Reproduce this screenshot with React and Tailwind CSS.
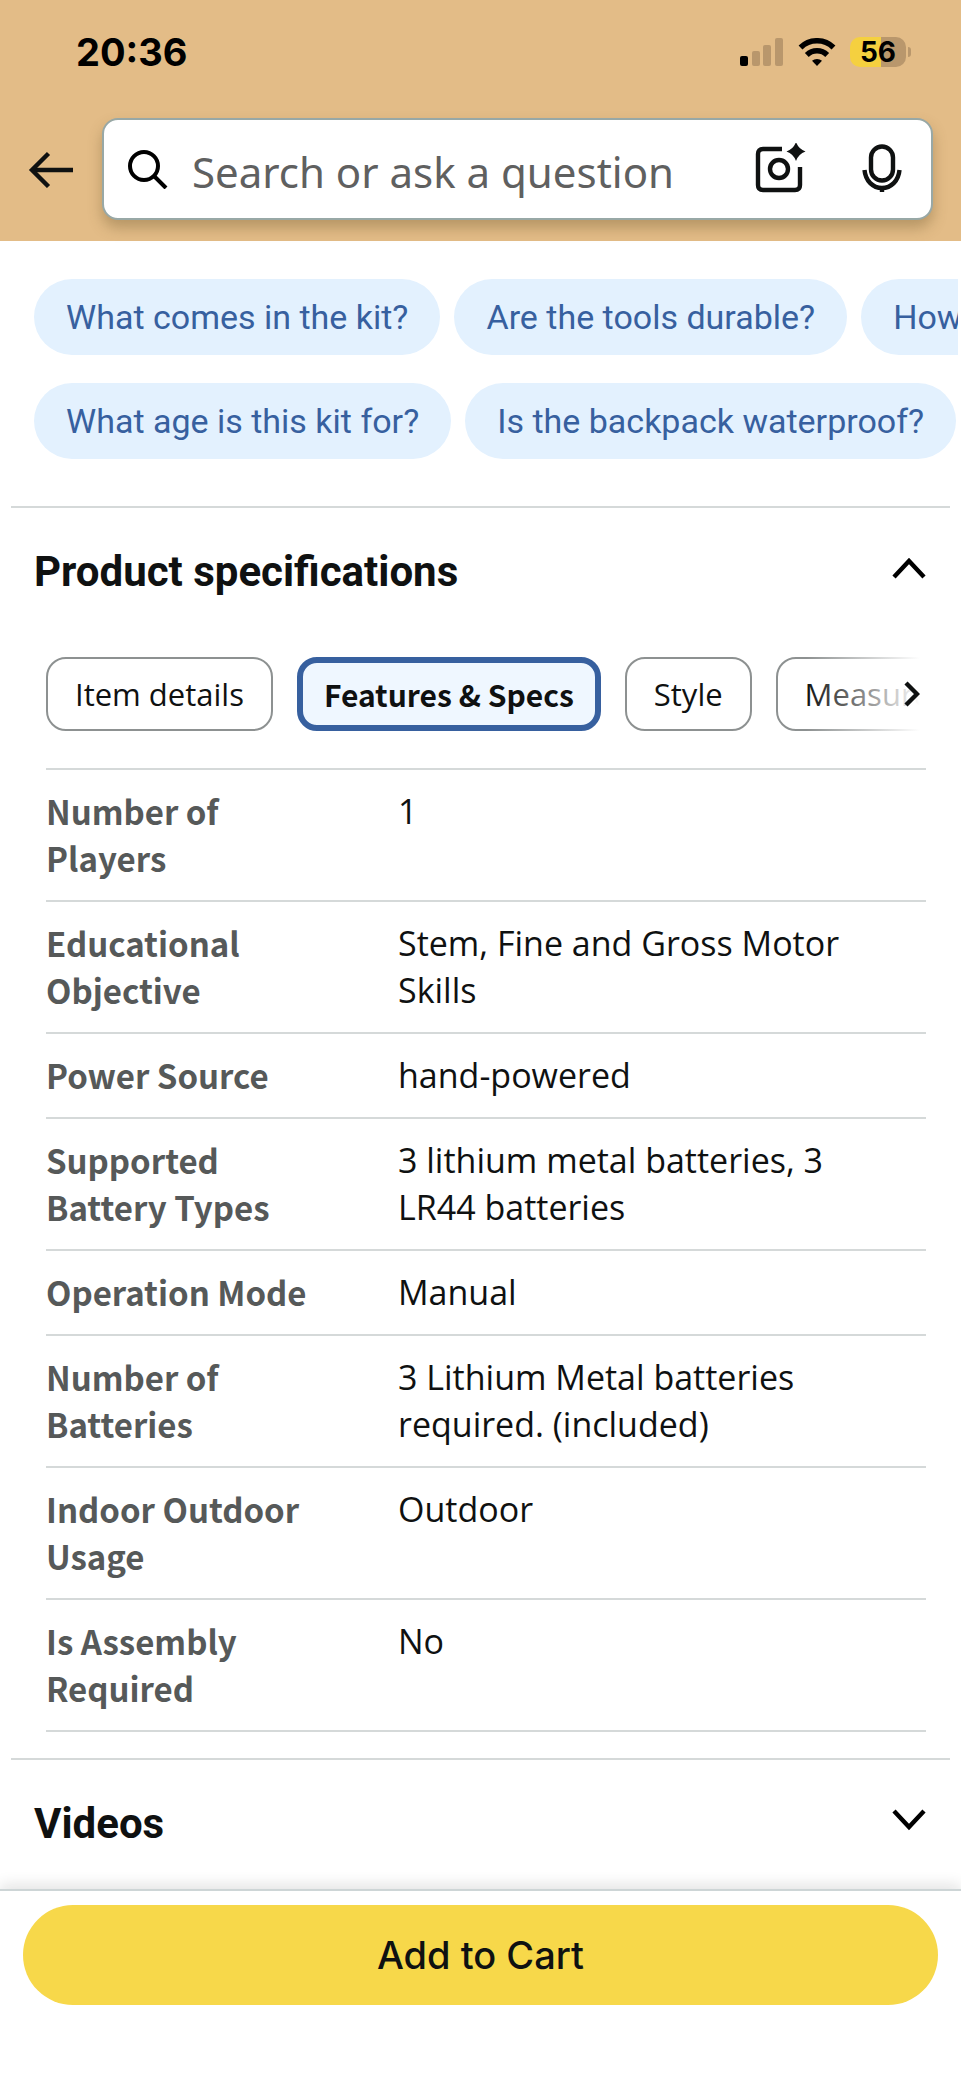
import React, { useState } from 'react';

const questionRows = [
    ['What comes in the kit?', 'Are the tools durable?', 'How long do batteries last?'],
    ['What age is this kit for?', 'Is the backpack waterproof?'],
];

const tabs = ['Item details', 'Features & Specs', 'Style', 'Measurements'];

const specs = [
    ['Number of Players', '1'],
    ['Educational Objective', 'Stem, Fine and Gross Motor Skills'],
    ['Power Source', 'hand-powered'],
    ['Supported Battery Types', '3 lithium metal batteries, 3 LR44 batteries'],
    ['Operation Mode', 'Manual'],
    ['Number of Batteries', '3 Lithium Metal batteries required. (included)'],
    ['Indoor Outdoor Usage', 'Outdoor'],
    ['Is Assembly Required', 'No'],
];

function StatusBar() {
    return (
        <div className="flex items-center justify-between pl-[76px] pr-[50px] pt-7 font-['Inter',sans-serif]">
            <span className="text-[38px] leading-[48px] font-bold">20:36</span>
            <div className="flex items-center">
                {/* Signal */}
                <svg width="44" height="28" viewBox="0 0 44 28" aria-hidden="true">
                    <rect x="0" y="18" width="8" height="10" rx="2" fill="#000" />
                    <rect x="12" y="13" width="8" height="15" rx="2" fill="#b9976c" />
                    <rect x="23" y="7" width="8" height="21" rx="2" fill="#b9976c" />
                    <rect x="35" y="0" width="8" height="28" rx="2" fill="#b9976c" />
                </svg>
                {/* Wifi */}
                <svg className="ml-3.5" width="38" height="28" viewBox="0 0 38 28" fill="none" stroke="#000" strokeWidth="5.5" aria-hidden="true">
                    <path d="M2.5 9.5 A23.5 23.5 0 0 1 35.5 9.5" />
                    <path d="M8.8 17 A14.6 14.6 0 0 1 29.2 17" />
                    <path d="M19 28 L14 22.8 A7.5 7.5 0 0 1 24 22.8 Z" fill="#000" stroke="none" />
                </svg>
                {/* Battery */}
                <div className="ml-3.5 flex h-[30px] w-[56px] items-center justify-center rounded-[10px] bg-linear-to-r from-[#f5d03f] from-55% to-[#b9976c] to-55%">
                    <span className="text-[28px] leading-[30px] font-bold">56</span>
                </div>
                <div className="ml-0.5 h-2.5 w-[3px] rounded-r-full bg-[#b9976c]" />
            </div>
        </div>
    );
}

function SearchHeader() {
    const [query, setQuery] = useState('');

    return (
        <header className="bg-[#e3bc87] pb-[21px] text-black">
            <StatusBar />
            <div className="mt-[42px] flex items-center px-7">
                <button type="button" aria-label="Back" className="shrink-0">
                    <svg width="46" height="38" viewBox="0 0 46 38" fill="none" stroke="#0f1111" strokeWidth="4.4">
                        <path d="M45 20 H4" />
                        <path d="M20.5 3.5 L4 20 L20.5 36.5" />
                    </svg>
                </button>
                <div className="ml-7 flex h-[102px] min-w-0 flex-1 items-center rounded-2xl border-2 border-[#98a8a6] bg-white pl-6 pr-[29px] shadow-[0_8px_14px_rgba(100,80,40,0.35)]">
                    <svg className="shrink-0" width="40" height="40" viewBox="0 0 40 40" fill="none" stroke="#000" strokeWidth="4" aria-hidden="true">
                        <circle cx="16" cy="17" r="14" />
                        <path d="M26 27 L38 39" />
                    </svg>
                    <input
                        type="text"
                        aria-label="Search"
                        value={query}
                        onChange={(e) => setQuery(e.target.value)}
                        placeholder="Search or ask a question"
                        className="ml-6 min-w-0 flex-1 bg-transparent pt-1 font-['Noto_Sans',sans-serif] text-[42px] text-[#0f1111] placeholder:text-[#5f6060] focus:outline-none"
                    />
                    <button type="button" aria-label="Search with camera" className="shrink-0">
                        <svg width="52" height="52" viewBox="0 0 52 52" fill="none" stroke="#0f1111" strokeWidth="4.4">
                            <path d="M28 6 H9 Q4 6 4 11 V42 Q4 47 9 47 H41 Q46 47 46 42 V24" />
                            <circle cx="25" cy="26" r="9" />
                            <path d="M42 -1 Q44.5 6 51.5 8.5 Q44.5 11 42 18 Q39.5 11 32.5 8.5 Q39.5 6 42 -1 Z" fill="#0f1111" stroke="none" />
                        </svg>
                    </button>
                    <button type="button" aria-label="Voice search" className="ml-14 shrink-0">
                        <svg width="40" height="50" viewBox="0 0 40 50" fill="none" stroke="#0f1111" strokeWidth="4.4">
                            <rect x="9" y="2.5" width="22" height="34" rx="11" />
                            <path d="M2.5 26 C3.5 37 11 44 20 44 C29 44 36.5 37 37.5 26" />
                            <path d="M20 44 V48" />
                        </svg>
                    </button>
                </div>
            </div>
        </header>
    );
}

function SuggestedQuestions() {
    return (
        <div className="mr-[3px] space-y-7 overflow-hidden pl-[34px] pt-[38px] pb-[47px]">
            {questionRows.map((row) => (
                <div key={row[0]} className="flex gap-3.5">
                    {row.map((question) => (
                        <button
                            key={question}
                            type="button"
                            className="shrink-0 rounded-full bg-[#e3f1fe] px-8 font-['Roboto',sans-serif] text-[34px] leading-[76px] whitespace-nowrap text-[#37609f]"
                        >
                            {question}
                        </button>
                    ))}
                </div>
            ))}
        </div>
    );
}

function SectionHeader({ title, open, onToggle }) {
    return (
        <h2>
            <button
                type="button"
                aria-expanded={open}
                onClick={onToggle}
                className="flex w-full items-center justify-between py-9 pl-[23px] pr-6 text-left font-['Roboto',sans-serif] text-[42px] leading-[56px] font-bold text-[#0f1111]"
            >
                {title}
                <svg className="mb-2" width="34" height="22" viewBox="0 0 34 22" fill="none" stroke="#000" strokeWidth="4.4" aria-hidden="true">
                    {open ? <path d="M2 20 L17 4 L32 20" /> : <path d="M2 2 L17 18 L32 2" />}
                </svg>
            </button>
        </h2>
    );
}

function SpecTabs() {
    const [active, setActive] = useState('Features & Specs');

    return (
        <div className="relative overflow-hidden">
            <div className="flex gap-6" role="tablist">
                {tabs.map((tab) => (
                    <button
                        key={tab}
                        type="button"
                        role="tab"
                        aria-selected={tab === active}
                        onClick={() => setActive(tab)}
                        className={`h-[74px] shrink-0 rounded-[20px] whitespace-nowrap text-[#0f1111] ${
                            tab === active
                                ? "border-[6px] border-[#37609f] bg-[#eff7ff] px-[21px] font-['Noto_Sans_CJK_SC',sans-serif] text-[30px] font-bold"
                                : "border-2 border-[#8d9191] px-[27px] font-['Open_Sans',sans-serif] text-[31px]"
                        }`}
                    >
                        {tab}
                    </button>
                ))}
            </div>
            <button
                type="button"
                aria-label="Next tabs"
                className="absolute inset-y-0 right-0 flex w-[120px] items-center justify-end bg-linear-to-r from-transparent to-white to-95% pr-1.5"
            >
                <svg width="16" height="26" viewBox="0 0 16 26" fill="none" stroke="#0f1111" strokeWidth="4.4">
                    <path d="M2 2 L13 13 L2 24" />
                </svg>
            </button>
        </div>
    );
}

function SpecTable() {
    return (
        <table className="mt-[37px] w-full border-t-2 border-[#d5d9d9] leading-[47px]">
            <tbody>
                {specs.map(([label, value]) => (
                    <tr key={label} className="border-b-2 border-[#d5d9d9] align-top">
                        <th scope="row" className="w-2/5 py-[18px] pr-16 text-left font-['Noto_Sans_CJK_SC',sans-serif] text-[33px] font-bold text-[#565959]">
                            {label}
                        </th>
                        <td className="py-[18px] pr-10 font-['Open_Sans',sans-serif] text-[34px] text-[#0f1111]">{value}</td>
                    </tr>
                ))}
            </tbody>
        </table>
    );
}

export default function App() {
    const [specsOpen, setSpecsOpen] = useState(true);
    const [videosOpen, setVideosOpen] = useState(false);

    return (
        <div className="min-h-screen overflow-hidden bg-white">
            <SearchHeader />
            <main>
                <SuggestedQuestions />

                {/* Product specifications */}
                <section className="mx-[11px] border-t-2 border-[#d5d9d9]">
                    <SectionHeader title="Product specifications" open={specsOpen} onToggle={() => setSpecsOpen(!specsOpen)} />
                    {specsOpen && (
                        <div className="pl-[35px] pr-6 pt-[21px] pb-[26px]">
                            <SpecTabs />
                            <SpecTable />
                        </div>
                    )}
                </section>

                {/* Videos */}
                <section className="mx-[11px] border-t-2 border-[#d5d9d9]">
                    <SectionHeader title="Videos" open={videosOpen} onToggle={() => setVideosOpen(!videosOpen)} />
                </section>
            </main>

            {/* Buy bar */}
            <div className="mt-px border-t-2 border-[#cdd5d6] bg-white px-[23px] pt-3.5 pb-[75px] shadow-[0_-4px_14px_rgba(15,17,17,0.12)]">
                <button
                    type="button"
                    className="w-full rounded-full bg-[#f7d84a] font-['Inter',sans-serif] text-[38px] leading-[100px] font-medium text-[#0f1111]"
                >
                    Add to Cart
                </button>
            </div>
        </div>
    );
}
